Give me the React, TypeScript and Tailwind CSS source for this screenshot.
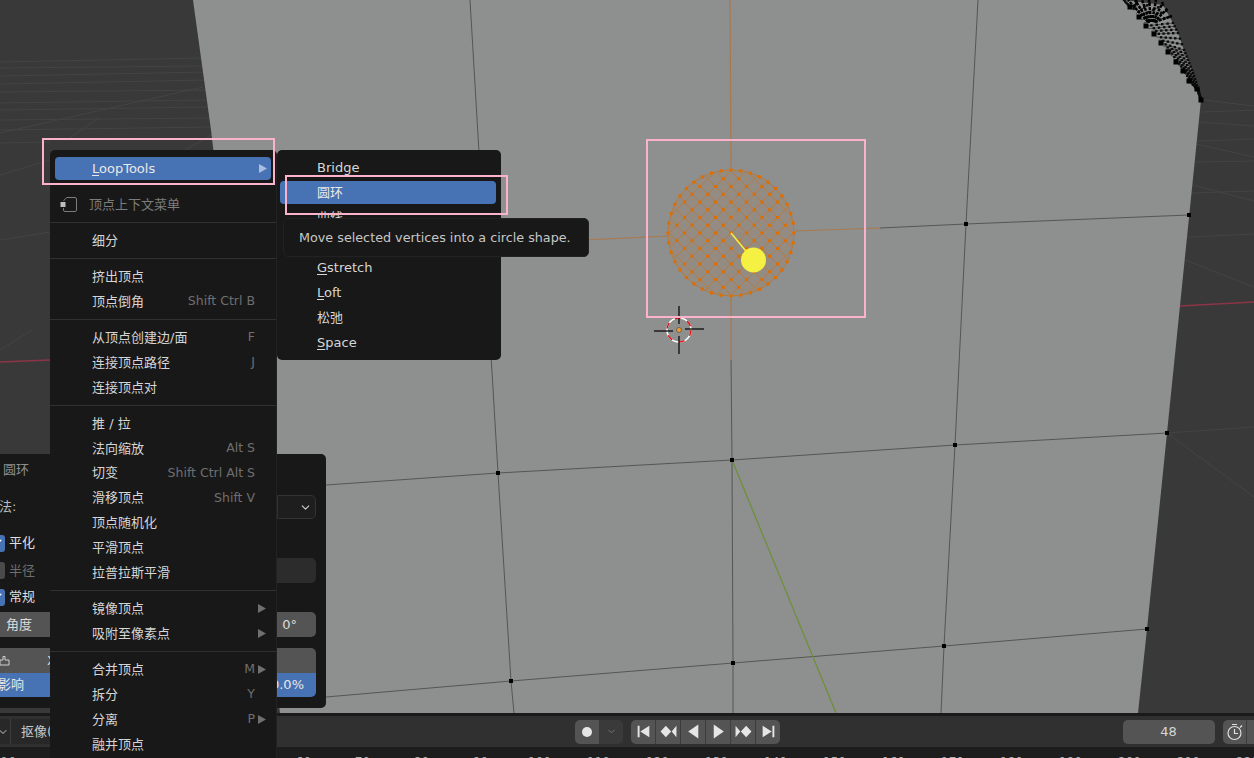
import { Check, ChevronDown } from "lucide-react";
import type { ReactNode } from "react";

const GRID_LINES = [
  [0, 62, 206, 58], [0, 68, 206, 66], [0, 76, 208, 72], [0, 84, 208, 80], [0, 92, 209, 90],
  [0, 103, 210, 100], [0, 110, 210, 107], [0, 120, 212, 118], [0, 130, 212, 127], [0, 143, 50, 142],
  [0, 133, 203, 87], [67, 140, 100, 117], [185, 150, 212, 135], [0, 175, 50, 160], [0, 350, 32, 330],
  [0, 240, 50, 232], [1204, 100, 1254, 106], [1203, 112, 1254, 110], [1200, 122, 1254, 126],
  [1197, 141, 1254, 139], [1196, 144, 1254, 157], [1193, 162, 1254, 161], [1192, 185, 1254, 201],
  [1191, 193, 1254, 191], [1187, 237, 1254, 234], [1185, 260, 1254, 287], [1167, 433, 1254, 427],
  [1167, 433, 1254, 497],
];

const INNER_EDGE = [
  [1130, 7], [1139, 17], [1146, 26], [1154, 34], [1161, 43], [1168, 52], [1176, 62], [1183, 71], [1189, 81], [1197, 89], [1201, 100],
];
const OUTER_EDGE = [
  [1124, 0], [1163, 5], [1173, 23], [1178, 33], [1184, 50], [1188, 60], [1192, 70], [1195, 79], [1198, 88], [1199, 92], [1201, 100],
];

const PLANE = [
  "193,0 211,130 280,713 1138,713 1147,629 1167,433 1201,100",
  OUTER_EDGE.slice().reverse().map((p) => p.join(",")).join(" "),
  "1124,0",
].join(" ");

const VERTS = [
  [966, 224], [1189, 215], [498, 473], [732, 460], [955, 445], [1167, 433], [733, 663], [511, 681], [944, 646], [1147, 629],
];

const CX = 731;
const CY = 233;
const R = 63;
const STEP = 7.75;

function latticeDots() {
  const dots: number[][] = [];
  for (let i = -9; i <= 9; i++) {
    for (let j = -9; j <= 9; j++) {
      const x = (i + j) * STEP;
      const y = (i - j) * STEP;
      if (Math.hypot(x, y) < R - 4) dots.push([CX + x, CY + y]);
    }
  }
  for (let a = 0; a < 40; a++) {
    const t = (a / 40) * Math.PI * 2;
    dots.push([CX + R * Math.cos(t), CY + R * Math.sin(t)]);
  }
  return dots;
}

function latticeLines() {
  const lines: number[][] = [];
  for (let k = -9; k <= 9; k++) {
    const c = k * STEP;
    const half = Math.sqrt(Math.max(0, R * R - 2 * c * c));
    const s = half / Math.SQRT2;
    if (half > 0) {
      lines.push([CX + c - s, CY - c - s, CX + c + s, CY - c + s]);
      lines.push([CX + c - s, CY + c + s, CX + c + s, CY + c - s]);
    }
  }
  return lines;
}

// in-between spokes of the bevel fan, so it reads as dense as the mesh does
function fanSpokes() {
  const spokes: number[][] = [];
  for (let i = 0; i < INNER_EDGE.length - 1; i++) {
    for (const f of [0, 0.33, 0.66]) {
      spokes.push([
        INNER_EDGE[i][0] + (INNER_EDGE[i + 1][0] - INNER_EDGE[i][0]) * f,
        INNER_EDGE[i][1] + (INNER_EDGE[i + 1][1] - INNER_EDGE[i][1]) * f,
        OUTER_EDGE[i][0] + (OUTER_EDGE[i + 1][0] - OUTER_EDGE[i][0]) * f,
        OUTER_EDGE[i][1] + (OUTER_EDGE[i + 1][1] - OUTER_EDGE[i][1]) * f,
      ]);
    }
  }
  return spokes;
}

function Scene() {
  return (
    <svg className="absolute inset-0" width={1254} height={713} viewBox="0 0 1254 713">
      {GRID_LINES.map(([a, b, c, d], i) => (
        <line key={i} x1={a} y1={b} x2={c} y2={d} stroke="#444444" strokeWidth={1} />
      ))}
      <line x1={0} y1={362} x2={50} y2={360} stroke="#8c3546" strokeWidth={1.5} />
      <line x1={1180} y1={306} x2={1254} y2={302} stroke="#8c3546" strokeWidth={1.5} />
      <polygon points={PLANE} fill="#8e8f8f" />

      <g stroke="#555656" strokeWidth={1} fill="none">
        <polyline points="470,0 498,473 511,681 514,713" />
        <polyline points="731,360 732,460 733,663 733,713" />
        <polyline points="978,0 966,224 955,445 944,646 941,713" />
        <polyline points="880,228 966,224 1189,215" />
        <polyline points="326,485 498,473 732,460 955,445 1167,433" />
        <polyline points="326,697 511,681 733,663 944,646 1147,629" />
      </g>
      <line x1={732} y1={460} x2={836} y2={713} stroke="#6c9033" strokeWidth={1.2} />
      <g stroke="#a87a4e" strokeWidth={1.2} fill="none">
        <line x1={730} y1={0} x2={731} y2={170} />
        <line x1={731} y1={296} x2={731} y2={360} />
        <line x1={500} y1={244} x2={668} y2={236} />
        <line x1={795} y1={231} x2={880} y2={228} />
      </g>

      {VERTS.map(([x, y], i) => (
        <rect key={i} x={x - 2} y={y - 2} width={4} height={4} fill="#000" />
      ))}

      {/* bevel fan top right */}
      {fanSpokes().map(([x, y, ox, oy], i) => (
        <g key={i}>
          <line x1={x} y1={y} x2={ox} y2={oy} stroke="#4a4a4a" strokeWidth={1} />
          {[0.2, 0.4, 0.6, 0.8, 1].map((k) => (
            <rect key={k} x={x + (ox - x) * k - 1.2} y={y + (oy - y) * k - 1.2} width={2.4} height={2.4} fill="#0c0c0c" />
          ))}
        </g>
      ))}
      {INNER_EDGE.map(([x, y], i) => (
        <rect key={i} x={x - 2.5} y={y - 2.5} width={5} height={5} fill="#000" />
      ))}
      {[[1128, 0], [1135, 0], [1142, 0], [1149, 0], [1156, 0], [1163, 2], [1168, 8], [1172, 16]].map(([x, y], i) => (
        <line key={i} x1={1148 + i} y1={22} x2={x} y2={y} stroke="#000" strokeWidth={2.5} strokeDasharray="3 1" />
      ))}

      {/* circle made by LoopTools */}
      <circle cx={CX} cy={CY} r={R} fill="#e07800" fillOpacity={0.08} stroke="#b87a3a" strokeWidth={1} />
      <g stroke="#b87a3a" strokeWidth={0.8}>
        {latticeLines().map(([a, b, c, d], i) => (
          <line key={i} x1={a} y1={b} x2={c} y2={d} />
        ))}
      </g>
      {latticeDots().map(([x, y], i) => (
        <rect key={i} x={x - 1.6} y={y - 1.6} width={3.2} height={3.2} rx={0.8} fill="#de6e00" />
      ))}
      <line x1={731} y1={233} x2={750} y2={256} stroke="#f5f142" strokeWidth={1.5} />
      <circle cx={753.5} cy={260} r={12.5} fill="#f5f142" />

      {/* 3d cursor */}
      <circle cx={679} cy={330} r={12} fill="none" stroke="#fff" strokeWidth={1.5} />
      <circle cx={679} cy={330} r={12} fill="none" stroke="#e01010" strokeWidth={1.5} strokeDasharray="6 7" />
      <g stroke="#000" strokeWidth={1.2}>
        <line x1={654} y1={331} x2={673} y2={331} />
        <line x1={685} y1={329} x2={704} y2={329} />
        <line x1={679} y1={306} x2={679} y2={324} />
        <line x1={679} y1={336} x2={679} y2={354} />
      </g>
      <circle cx={679} cy={330} r={2.5} fill="#ef9a33" stroke="#333" strokeWidth={0.5} />
    </svg>
  );
}

function MenuRow({ label, shortcut, arrow }: { label: string; shortcut?: string; arrow?: boolean }) {
  return (
    <div className="flex h-[24.9px] items-center justify-between pl-[42px] pr-[10px]">
      <span className="text-[#d6d6d6]">{label}</span>
      <span className="flex items-center text-[12.5px] text-[#6f6f6f]">
        {shortcut}
        <span className="ml-[3px] w-[8px]">{arrow && <Arrow color="#6f6f6f" />}</span>
      </span>
    </div>
  );
}

function Arrow({ color }: { color: string }) {
  return (
    <svg width={8} height={9} viewBox="0 0 8 9" className="block">
      <polygon points="0,0 8,4.5 0,9" fill={color} />
    </svg>
  );
}

function Separator() {
  return (
    <div className="flex h-[11.2px] items-center">
      <div className="h-px w-full bg-[#303030]" />
    </div>
  );
}

function VertexMenu() {
  return (
    <div className="absolute left-[50px] top-[150px] h-[620px] w-[227px] rounded-t-[5px] border-r border-[#222] bg-[#181818] pt-[7px] text-[13px]">
      <div className="mx-[5px] flex h-[23px] items-center justify-between rounded-[4px] bg-[#4772b3] pl-[37px] pr-[4px]">
        <span className="text-[#e8e8e8]">
          <span className="underline underline-offset-2">L</span>oopTools
        </span>
        <Arrow color="#a9bfe0" />
      </div>
      <div className="mt-[12px] flex h-[24.9px] items-center pl-[10px] text-[#7c7c7c]">
        <svg width={18} height={17} viewBox="0 0 18 17" fill="none" className="mr-[11px]">
          <path d="M6.5 1.5 H15 Q16.5 1.5 16.5 3 V14 Q16.5 15.5 15 15.5 H5 Q3.5 15.5 3.5 14 V12 M3.5 5 L6.5 1.5" stroke="#7c7c7c" strokeWidth={1} />
          <rect x={0.5} y={6} width={5} height={5} fill="#bdbdbd" />
        </svg>
        顶点上下文菜单
      </div>
      <Separator />
      <MenuRow label="细分" />
      <Separator />
      <MenuRow label="挤出顶点" />
      <MenuRow label="顶点倒角" shortcut="Shift Ctrl B" />
      <Separator />
      <MenuRow label="从顶点创建边/面" shortcut="F" />
      <MenuRow label="连接顶点路径" shortcut="J" />
      <MenuRow label="连接顶点对" />
      <Separator />
      <MenuRow label="推 / 拉" />
      <MenuRow label="法向缩放" shortcut="Alt S" />
      <MenuRow label="切变" shortcut="Shift Ctrl Alt S" />
      <MenuRow label="滑移顶点" shortcut="Shift V" />
      <MenuRow label="顶点随机化" />
      <MenuRow label="平滑顶点" />
      <MenuRow label="拉普拉斯平滑" />
      <Separator />
      <MenuRow label="镜像顶点" arrow />
      <MenuRow label="吸附至像素点" arrow />
      <Separator />
      <MenuRow label="合并顶点" shortcut="M" arrow />
      <MenuRow label="拆分" shortcut="Y" />
      <MenuRow label="分离" shortcut="P" arrow />
      <MenuRow label="融并顶点" />
    </div>
  );
}

function SubRow({ children, active }: { children?: ReactNode; active?: boolean }) {
  return (
    <div
      className={
        active
          ? "ml-[3px] mr-[5px] flex h-[23px] my-px items-center rounded-[4px] bg-[#4772b3] pl-[37px] text-[#e8e8e8]"
          : "flex h-[25px] items-center pl-[40px] text-[#d6d6d6]"
      }
    >
      <span>{children}</span>
    </div>
  );
}

function Mnemonic({ first, rest }: { first: string; rest: string }) {
  return (
    <>
      <span className="underline underline-offset-2">{first}</span>
      {rest}
    </>
  );
}

function LoopToolsMenu() {
  return (
    <div className="absolute left-[277px] top-[150px] h-[210px] w-[224px] rounded-[5px] bg-[#181818] pt-[5px] text-[13px]">
      <SubRow>Bridge</SubRow>
      <SubRow active>圆环</SubRow>
      <SubRow>曲线</SubRow>
      <SubRow />
      <SubRow><Mnemonic first="G" rest="stretch" /></SubRow>
      <SubRow><Mnemonic first="L" rest="oft" /></SubRow>
      <SubRow>松弛</SubRow>
      <SubRow><Mnemonic first="S" rest="pace" /></SubRow>
    </div>
  );
}

function Tooltip() {
  return (
    <div className="absolute left-[283px] top-[218px] flex h-[39px] w-[306px] items-center rounded-[5px] border border-[#222] bg-[#181818] pl-[15px] text-[12.75px] whitespace-nowrap text-[#c8c8c8]">
      Move selected vertices into a circle shape.
    </div>
  );
}

function CheckRow({ label, on }: { label: string; on: boolean }) {
  return (
    <div className="flex items-center">
      <div className={on ? "-ml-[13px] flex h-[17px] w-[18px] items-center justify-center rounded-[3px] bg-[#4772b3]" : "-ml-[13px] h-[17px] w-[18px] rounded-[3px] bg-[#4a4a4a]"}>
        {on && <Check size={13} strokeWidth={2.5} className="text-white" />}
      </div>
      <span className={on ? "ml-[4px] text-[#e0e0e0]" : "ml-[4px] text-[#6e6e6e]"}>{label}</span>
    </div>
  );
}

function RedoPanel() {
  return (
    <div className="absolute left-0 top-[454px] h-[254px] w-[326px] rounded-r-[5px] bg-[#181818] pr-[10px] pt-[6px] text-[13px]">
      <div className="flex h-[20px] items-center pl-[3px] text-[#8e8e8e]">圆环</div>
      <div className="mt-[15px] flex h-[24px] items-center justify-between">
        <span className="-ml-[1px] text-[#bcbcbc]">法:</span>
        <div className="flex h-full w-[39px] items-center justify-end rounded-r-[5px] border border-[#333] bg-[#1e1e1e] pr-[3px]">
          <ChevronDown size={13} className="text-[#d0d0d0]" />
        </div>
      </div>
      <div className="mt-[12px] flex h-[24px] items-center">
        <CheckRow label="平化" on />
      </div>
      <div className="mt-[3px] flex h-[25px] items-center justify-between">
        <CheckRow label="半径" on={false} />
        <div className="h-full w-[39px] rounded-r-[5px] bg-[#2c2c2c]" />
      </div>
      <div className="mt-[2px] flex h-[24px] items-center">
        <CheckRow label="常规" on />
      </div>
      <div className="mt-[3px] flex h-[25px] items-center justify-between rounded-r-[5px] bg-[#545454] pl-[6px] pr-[19px] text-[#dcdcdc]">
        <span>角度</span>
        <span>0°</span>
      </div>
      <div className="mt-[11px] flex h-[25px] items-center rounded-tr-[5px] bg-[#545454] text-[#dcdcdc]">
        <svg width={11} height={11} viewBox="0 0 11 11" fill="none" className="-ml-[1px]">
          <path d="M1 5 H4 V1.5 H6 V5 H10 V10 H1 Z" stroke="#cfcfcf" strokeWidth={1} />
        </svg>
        <span className="ml-[37px]">X</span>
      </div>
      <div className="flex h-[24px] items-center justify-between rounded-br-[5px] bg-[#4772b3] pr-[12px] text-[#e8e8e8]">
        <span className="-ml-[2px]">影响</span>
        <span>100.0%</span>
      </div>
    </div>
  );
}

const TRANSPORT = [
  { label: "start", d: "M2.500 2.500h1.800v11H2.500z M13.500 2.500v11L5 8z" },
  { label: "prevKey", d: "M5.500 2.500L10.500 8l-5 5.500L.5 8z M15.500 2.500v11L11 8z" },
  { label: "reverse", d: "M12.500 1.500v13L3 8z" },
  { label: "play", d: "M3.500 1.500v13L13 8z" },
  { label: "nextKey", d: "M.5 2.500v11L5 8z M10.500 2.500L15.500 8l-5 5.500L5.500 8z" },
  { label: "end", d: "M2.500 2.500v11L11 8z M11.700 2.500h1.800v11h-1.800z" },
];

function TimelineHeader() {
  return (
    <div className="flex h-[31px] items-center bg-[#303030]">
      <div className="flex h-[25px] w-[60px] items-center rounded-r-[4px] bg-[#282828] text-[13px] text-[#c8c8c8]">
        <div className="flex h-full w-[11px] items-center border-r border-[#3c3c3c]">
          <ChevronDown size={12} className="-ml-[3px]" />
        </div>
        <span className="ml-[10px] mt-px whitespace-nowrap">抠像(</span>
      </div>
      <div className="ml-[515px] flex h-[24px] w-[48px] overflow-hidden rounded-[5px]">
        <div className="flex w-[24px] items-center justify-center bg-[#545454]">
          <div className="h-[10px] w-[10px] rounded-full bg-[#e6e6e6]" />
        </div>
        <div className="flex flex-1 items-center justify-center bg-[#3a3a3a]">
          <ChevronDown size={11} className="text-[#7a7a7a]" />
        </div>
      </div>
      <div className="ml-[8px] flex h-[24px] w-[149px] overflow-hidden rounded-[5px] bg-[#545454]">
        {TRANSPORT.map((b, i) => (
          <div key={b.label} className={i === 5 ? "flex flex-1 items-center justify-center" : "flex flex-1 items-center justify-center border-r border-[#3d3d3d]"}>
            <svg width={17} height={17} viewBox="0 0 16 16">
              <path d={b.d} fill="#e6e6e6" />
            </svg>
          </div>
        ))}
      </div>
      <div className="ml-auto flex h-[24px] w-[92px] items-center justify-center rounded-[5px] bg-[#545454] pr-[1px] text-[13px] text-[#d6d6d6]">48</div>
      <div className="ml-[8px] mr-[-16px] flex h-[24px] w-[47px] overflow-hidden rounded-[5px] bg-[#545454]">
        <div className="flex w-[24px] items-center justify-center border-r border-[#3d3d3d]">
          <svg width={18} height={18} viewBox="0 0 18 18" fill="none" stroke="#e0e0e0" strokeWidth={1.2}>
            <circle cx={8.500} cy={10} r={6.500} />
            <path d="M6 1.500h5 M8.500 6v4.500H12 M14 4.500l2-2" />
          </svg>
        </div>
      </div>
    </div>
  );
}

const RULER_FRAMES = Array.from({ length: 22 }, (_, i) => (i + 1) * 10);

function Ruler() {
  return (
    <div className="-ml-[21px] flex h-[11px] overflow-hidden bg-[#1d1d1d] pt-[8px] text-[12px] leading-[14px] text-[#b0b0b0]">
      {RULER_FRAMES.map((frame) => (
        <span key={frame} className="w-[59px] shrink-0 text-center">
          {frame}
        </span>
      ))}
    </div>
  );
}

function Highlight({ className }: { className: string }) {
  return <div className={`absolute border-2 border-[#fcb2cb] ${className}`} />;
}

export default function App() {
  return (
    <div className="relative flex h-[758px] w-[1254px] flex-col overflow-hidden bg-[#1d1d1d] font-['DejaVu_Sans','Noto_Sans_CJK_SC',sans-serif]">
      <div className="relative h-[713px] shrink-0 bg-[#393939]">
        <Scene />
      </div>
      <div className="h-[3px] shrink-0 bg-[#1a1a1a]" />
      <TimelineHeader />
      <Ruler />

      <RedoPanel />
      <VertexMenu />
      <LoopToolsMenu />
      <Tooltip />

      <Highlight className="left-[42px] top-[138px] h-[47px] w-[233px]" />
      <Highlight className="left-[285px] top-[175px] h-[40px] w-[223px]" />
      <Highlight className="left-[646px] top-[139px] h-[179px] w-[220px]" />
    </div>
  );
}
